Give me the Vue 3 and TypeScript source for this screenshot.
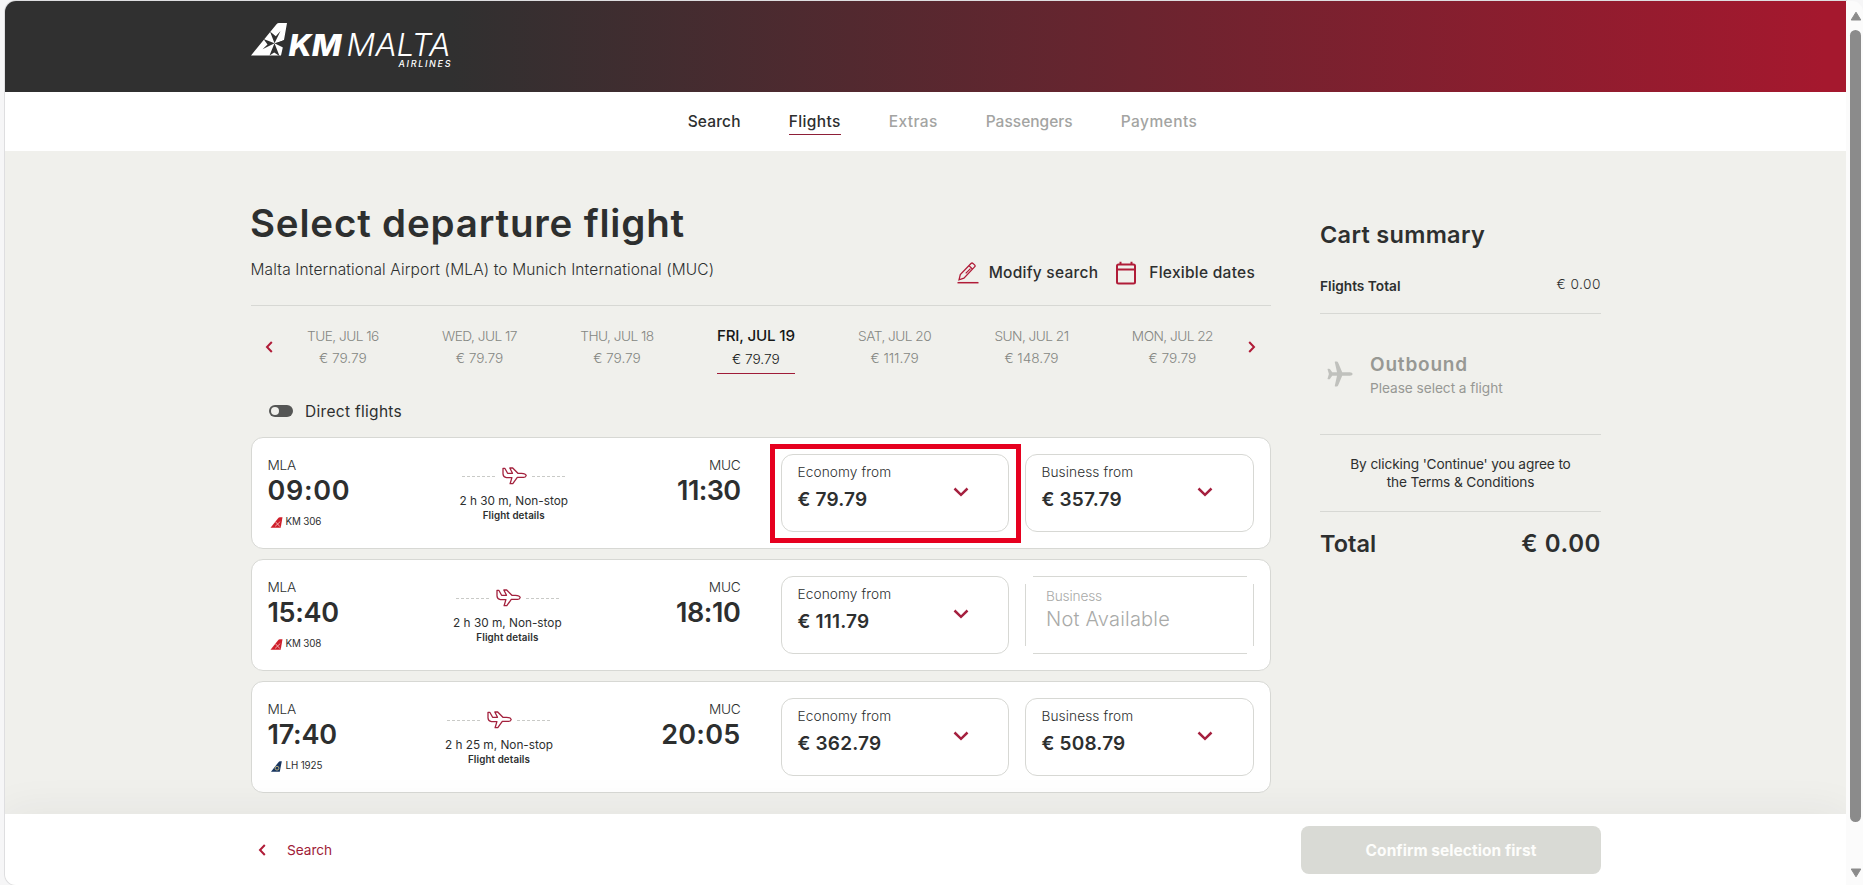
<script setup lang="ts">
interface Step { label: string; state: 'done' | 'current' | 'upcoming'; tracking: number }
interface Day { label: string; price: string; selected?: boolean }
interface Fare { cabin: string; price: string | null; highlighted?: boolean }
interface Flight {
  departs: string; departTracking: number
  arrives: string; arriveTracking: number
  duration: string; code: string; carrier: 'km' | 'lh'; fares: Fare[]
}

const steps: Step[] = [
  { label: 'Search', state: 'done', tracking: 0.16 },
  { label: 'Flights', state: 'current', tracking: 0.38 },
  { label: 'Extras', state: 'upcoming', tracking: 0.4 },
  { label: 'Passengers', state: 'upcoming', tracking: 0.01 },
  { label: 'Payments', state: 'upcoming', tracking: 0.45 },
]

const days: Day[] = [
  { label: 'TUE, JUL 16', price: '€ 79.79' },
  { label: 'WED, JUL 17', price: '€ 79.79' },
  { label: 'THU, JUL 18', price: '€ 79.79' },
  { label: 'FRI, JUL 19', price: '€ 79.79', selected: true },
  { label: 'SAT, JUL 20', price: '€ 111.79' },
  { label: 'SUN, JUL 21', price: '€ 148.79' },
  { label: 'MON, JUL 22', price: '€ 79.79' },
]

const flights: Flight[] = [
  {
    departs: '09:00', departTracking: 0.7, arrives: '11:30', arriveTracking: -0.6,
    duration: '2 h 30 m, Non-stop', code: 'KM 306', carrier: 'km',
    fares: [
      { cabin: 'Economy', price: '€ 79.79', highlighted: true },
      { cabin: 'Business', price: '€ 357.79' },
    ],
  },
  {
    departs: '15:40', departTracking: -0.3, arrives: '18:10', arriveTracking: -0.4,
    duration: '2 h 30 m, Non-stop', code: 'KM 308', carrier: 'km',
    fares: [
      { cabin: 'Economy', price: '€ 111.79' },
      { cabin: 'Business', price: null },
    ],
  },
  {
    departs: '17:40', departTracking: -0.25, arrives: '20:05', arriveTracking: 0.25,
    duration: '2 h 25 m, Non-stop', code: 'LH 1925', carrier: 'lh',
    fares: [
      { cabin: 'Economy', price: '€ 362.79' },
      { cabin: 'Business', price: '€ 508.79' },
    ],
  },
]

const spacing = (px: number) => ({ letterSpacing: `${px}px` })
</script>

<template>
  <div class="window">
    <div class="page">
      <header class="brand-bar">
        <svg class="logo" width="204" height="48" viewBox="0 0 204 48">
          <path d="M1 33.500 26.500 2.200Q27.500 1 29 1h8l-3 17-8 3.500 7 3-2 9z" fill="#fff" />
          <g fill="#303030">
            <path d="M24.500 21.300 20 9.500l5.800 4.800 4.700-5.300z" />
            <path d="M24.500 21.300 13.500 17l4 5.500-5 4.800z" />
            <path d="M24.500 21.300 19.500 33.500l4.700-3 5.300 3.500z" />
            <path d="M24.500 21.300 35 18l-2.500 3.500L34 26z" />
          </g>
          <text class="logo-bold" x="38.500" y="33.500" textLength="53" lengthAdjust="spacingAndGlyphs">KM</text>
          <text class="logo-thin" x="96.500" y="33.500" textLength="104" lengthAdjust="spacingAndGlyphs">MALTA</text>
          <text class="logo-small" x="148.500" y="45" textLength="52" lengthAdjust="spacing">AIRLINES</text>
        </svg>
      </header>

      <nav class="steps">
        <a v-for="s in steps" :key="s.label" class="step" :class="s.state" :style="spacing(s.tracking)">{{ s.label }}</a>
      </nav>

      <main class="content">
        <section class="results">
          <div class="title-row">
            <div>
              <h1>Select departure flight</h1>
              <p class="route">Malta International Airport (MLA) to Munich International (MUC)</p>
            </div>
            <div class="actions">
              <a class="action modify">
                <svg width="22" height="22" viewBox="0 0 22 22" fill="none" stroke="#b01c38" stroke-width="1.300">
                  <path d="M.500 20.700h21" stroke-width="1.500" />
                  <path d="M2 17.800 3.300 12.600 14 1.500q1-1 2-.100l1.600 1.500q1 1 0 2L6.900 16.200z M12 3.600l3.600 3.600 M8.700 11.400l4.800-4.800" />
                </svg>
                Modify search
              </a>
              <a class="action">
                <svg width="22" height="24" viewBox="0 0 22 24" fill="none" stroke="#b01c38" stroke-width="2">
                  <rect x="2" y="3.500" width="18" height="19" rx="1.500" />
                  <path d="M2 8.500h18M5.500.800v3M16.500.800v3" />
                </svg>
                Flexible dates
              </a>
            </div>
          </div>

          <div class="calendar">
            <svg class="chev" width="8" height="12" viewBox="0 0 8 12"><path d="M6.800 1 2 6l4.800 5" /></svg>
            <div class="days">
              <div v-for="d in days" :key="d.label" class="day" :class="{ selected: d.selected }">
                <span class="day-label">{{ d.label }}</span>
                <span class="day-price">{{ d.price }}</span>
              </div>
            </div>
            <svg class="chev" width="8" height="12" viewBox="0 0 8 12"><path d="M1.200 1 6 6l-4.800 5" /></svg>
          </div>

          <div class="direct">
            <span class="toggle"><i></i></span>
            <span>Direct flights</span>
          </div>

          <div class="cards">
            <article v-for="f in flights" :key="f.code" class="card">
              <div class="leg">
                <div class="stop">
                  <span class="iata">MLA</span>
                  <span class="time" :style="spacing(f.departTracking)">{{ f.departs }}</span>
                  <span class="code">
                    <svg v-if="f.carrier === 'km'" width="13" height="11" viewBox="0 0 13 11">
                      <path d="M.500 10.800 8.500.800Q9 .200 9.800.200h2.700l-1.800 10.600z" fill="#cf1f2b" />
                      <path d="m5.500 4.800 4.400 4.800m.300-5L5.200 9.300" stroke="#f6c9cb" stroke-width=".800" />
                    </svg>
                    <svg v-else width="13" height="11" viewBox="0 0 13 11">
                      <path d="M1 10.800 8.700.900Q9.200.300 10 .300h1.800L9.800 10.800z" fill="#17355f" />
                      <circle cx="7" cy="7.200" r="1.900" fill="none" stroke="#c9b87a" stroke-width=".900" />
                    </svg>
                    {{ f.code }}
                  </span>
                </div>
                <div class="journey">
                  <div class="track">
                    <i class="dash"></i>
                    <svg width="25" height="18" viewBox="0 0 25 18" fill="none" stroke="#a3213d" stroke-width="1.300" stroke-linejoin="round">
                      <path d="M1 1.300h1.800L5.600 6.300h4.900L7.800 1h2.900l5.200 5.300h3.600q4 .100 4.700 2.200-.300 1.900-2.400 1.900h-6.500l-4.500 6.300H8.100l1.800-6.100H4.500Q1.300 10.300 1 7z" />
                    </svg>
                    <i class="dash"></i>
                  </div>
                  <span class="duration">{{ f.duration }}</span>
                  <a class="details">Flight details</a>
                </div>
                <div class="stop end">
                  <span class="iata">MUC</span>
                  <span class="time" :style="spacing(f.arriveTracking)">{{ f.arrives }}</span>
                </div>
              </div>

              <div class="fares">
                <template v-for="fare in f.fares" :key="fare.cabin">
                  <button v-if="fare.price" class="fare" :class="{ highlighted: fare.highlighted }">
                    <span class="fare-text">
                      <span class="fare-label">{{ fare.cabin }} from</span>
                      <span class="fare-price">{{ fare.price }}</span>
                    </span>
                    <svg width="16" height="10" viewBox="0 0 16 10"><path d="m1.500 1.500 6.500 6.300 6.500-6.300" fill="none" stroke="#a5203f" stroke-width="2.500" /></svg>
                  </button>
                  <div v-else class="fare unavailable">
                    <span class="fare-text">
                      <span class="fare-label">{{ fare.cabin }}</span>
                      <span class="fare-none">Not Available</span>
                    </span>
                  </div>
                </template>
              </div>
            </article>
          </div>
        </section>

        <aside class="cart">
          <h2>Cart summary</h2>
          <div class="line"><b>Flights Total</b><span>€ 0.00</span></div>
          <div class="outbound">
            <svg width="26" height="26" viewBox="0 0 26 26" fill="#c0c1bd">
              <path d="M15.200 11.300 11.200 1.800Q10.700.500 9.500.500H8.300q-.700 0-.500.800l2.200 10H5.200L3.100 8.300Q2.700 7.800 2.100 7.800H1q-.600 0-.400.700L1.900 13 .600 17.500q-.200.700.400.700h1.100q.600 0 1-.500l2.100-3h4.800l-2.200 10q-.200.800.500.800h1.200q1.200 0 1.700-1.300l4-9.500h7.600q2.700 0 2.900-1.700-.200-1.700-2.900-1.700z" />
            </svg>
            <div>
              <strong>Outbound</strong>
              <p>Please select a flight</p>
            </div>
          </div>
          <p class="terms">By clicking 'Continue' you agree to<br>the Terms &amp; Conditions</p>
          <div class="total"><span class="word">Total</span><span>€ 0.00</span></div>
        </aside>
      </main>

      <footer class="footer">
        <a class="back">
          <svg class="chev" width="8" height="12" viewBox="0 0 8 12"><path d="M6.800 1 2 6l4.800 5" /></svg>
          Search
        </a>
        <button class="confirm">Confirm selection first</button>
      </footer>
    </div>

    <div class="scrollbar">
      <svg width="12" height="10" viewBox="0 0 12 10"><path d="M6 1.200 10.800 9H1.200z" /></svg>
      <div class="thumb"></div>
      <svg class="down" width="12" height="10" viewBox="0 0 12 10"><path d="M6 8.800 10.800 1H1.200z" /></svg>
    </div>
  </div>
</template>

<style>
body { margin: 0; overflow: hidden; background: #f7f7f8; }
</style>

<style scoped>
* { box-sizing: border-box; }
h1, h2, p { margin: 0; }
button { font: inherit; color: inherit; background: none; border: 0; padding: 0; text-align: left; }
svg { display: block; flex: none; }

.window {
  display: flex;
  width: 1863px;
  height: 885px;
  padding: 1px 0 0 5px;
  background: #f6f6f7;
  font-family: Inter, "Liberation Sans", sans-serif;
  color: #2d2f2f;
}
.page {
  display: flex;
  flex-direction: column;
  width: 1841px;
  overflow: hidden;
  background: #f0f0ec;
  border-radius: 11px 0 0 11px;
  box-shadow: 0 0 0 1px #dedee0;
}

.brand-bar {
  flex: none;
  height: 91px;
  padding: 21px 0 0 245px;
  background: linear-gradient(90deg, #303030 445px, #a5182e 1820px);
}
.logo-bold, .logo-thin { fill: #fff; font-style: italic; font-size: 30.500px; }
.logo-bold { font-weight: 800; }
.logo-thin { font-weight: 300; }
.logo-small { fill: #fff; font-style: italic; font-weight: 500; font-size: 9px; }

.steps {
  flex: none;
  display: flex;
  justify-content: center;
  gap: 48px;
  height: 59px;
  padding: 18px 0 0 34px;
  background: #fff;
}
.step {
  height: 25px;
  line-height: 23px;
  font-size: 15.500px;
  font-weight: 500;
  color: #2d2f2f;
}
.step.current { border-bottom: 1px solid #8e1f38; }
.step.upcoming { color: #a3a4a2; }

.content {
  flex: 1;
  display: flex;
  min-height: 0;
  padding: 48px 0 0 246px;
}
.results { width: 1020px; }
.title-row {
  display: flex;
  justify-content: space-between;
  height: 107px;
  border-bottom: 1px solid #d7d8d4;
}
h1 {
  font-size: 38.500px;
  line-height: 48px;
  font-weight: 600;
  letter-spacing: .820px;
  margin: 0 0 11px -1px;
}
.route { font-size: 15.500px; line-height: 24px; font-weight: 300; letter-spacing: .140px; margin-left: -.500px; }
.actions { display: flex; align-items: center; gap: 17px; height: 24px; margin: 62px 16px 0 0; }
.action { display: flex; align-items: center; gap: 12px; font-size: 15.500px; line-height: 24px; font-weight: 500; letter-spacing: .260px; }
.action.modify { gap: 10px; }

.calendar { display: flex; padding: 20px 15px 0 14px; height: 93px; }
.chev { margin-top: 15px; }
.chev path { fill: none; stroke: #b01c38; stroke-width: 2; }
.days { flex: 1; display: flex; justify-content: space-between; padding: 0 35px 0 34px; }
.day { display: flex; flex-direction: column; align-items: center; align-self: flex-start; font-weight: 300; font-size: 13.700px; color: #858783; }
.day-label { line-height: 20px; letter-spacing: -.540px; }
.day-price { line-height: 22px; margin-top: 1px; letter-spacing: -.050px; }
.day.selected { color: #161818; border-bottom: 1px solid #a01c38; padding-bottom: 4px; }
.day.selected .day-label { font-size: 15.200px; font-weight: 500; letter-spacing: -.190px; }
.day.selected .day-price { padding-top: 1px; margin-bottom: -1px; }

.direct { display: flex; align-items: center; gap: 12px; height: 24px; padding-left: 18px; font-size: 15.500px; letter-spacing: .300px; }
.toggle { display: flex; align-items: center; width: 24px; height: 12px; padding-left: 2px; border-radius: 6px; background: #555655; }
.toggle i { width: 8px; height: 8px; border-radius: 50%; background: #f0f0ec; }

.cards { display: flex; flex-direction: column; gap: 10px; margin-top: 14px; }
.card {
  display: flex;
  gap: 40px;
  height: 112px;
  padding: 0 16px 0 15px;
  background: #fff;
  border: 1px solid #d7d8d4;
  border-radius: 12px;
}
.leg { display: flex; justify-content: space-between; width: 474px; padding: 18px .500px 0 .500px; }
.stop { display: flex; flex-direction: column; }
.stop.end { align-items: flex-end; }
.iata { font-size: 13.700px; line-height: 18px; font-weight: 300; letter-spacing: -.250px; }
.time { font-size: 27px; line-height: 32px; font-weight: 600; margin-top: 1px; }
.code { display: flex; align-items: center; gap: 3px; padding-left: 2px; margin-top: 8px; font-size: 9.800px; line-height: 14px; letter-spacing: -.120px; }
.journey { display: flex; flex-direction: column; align-items: center; padding-top: 11px; }
.track { display: flex; align-items: center; gap: 5px; height: 18px; margin-bottom: 8px; padding-left: 2px; }
.dash { width: 35px; height: 1px; background: repeating-linear-gradient(90deg, #c9cac7 0 3px, transparent 3px 5px); }
.duration { font-size: 11.800px; line-height: 16px; }
.details { font-size: 9.800px; line-height: 14px; font-weight: 600; letter-spacing: .110px; }

.fares { display: flex; gap: 16px; padding-top: 16px; }
.fare {
  position: relative;
  display: flex;
  justify-content: space-between;
  width: 228px;
  height: 78px;
  padding: 8px 39px 0 15.500px;
  border: 1px solid #d7d8d4;
  border-radius: 12px;
}
.fare + .fare { width: 229px; padding-right: 40px; }
.fare svg { margin-top: 24px; }
.fare-text { display: flex; flex-direction: column; }
.fare-label { font-size: 13.700px; line-height: 18px; font-weight: 300; letter-spacing: .080px; }
.fare-price { font-size: 19px; line-height: 24px; margin-top: 7px; font-weight: 600; letter-spacing: .180px; }
.fare.highlighted::after {
  content: "";
  position: absolute;
  inset: -11px -13px -12px -12px;
  border: 5px solid #e6001f;
}
.fare.unavailable {
  border: 0;
  border-radius: 0;
  padding: 11px 0 0 21px;
  color: #a9aaa8;
  background:
    linear-gradient(#d7d8d4, #d7d8d4) center top / 214px 1px no-repeat,
    linear-gradient(#d7d8d4, #d7d8d4) center bottom / 214px 1px no-repeat,
    linear-gradient(#d7d8d4, #d7d8d4) left center / 1px 62px no-repeat,
    linear-gradient(#d7d8d4, #d7d8d4) right center / 1px 62px no-repeat;
}
.unavailable .fare-label { letter-spacing: -.170px; }
.fare-none { font-size: 20px; line-height: 24px; margin-top: 2px; font-weight: 300; letter-spacing: .210px; }

.cart { width: 281px; margin-left: 49px; padding-top: 21px; }
h2 { font-size: 23.500px; line-height: 30px; font-weight: 600; letter-spacing: .300px; }
.line {
  display: flex;
  justify-content: space-between;
  height: 64px;
  padding-top: 26px;
  font-size: 13.700px;
  line-height: 18px;
  border-bottom: 1px solid #d7d8d4;
}
.line b { font-weight: 600; padding-top: 1px; }
.line span { font-weight: 300; letter-spacing: .500px; margin-top: -1px; }
.outbound {
  display: flex;
  gap: 17px;
  height: 121px;
  padding: 38px 0 0 7px;
  color: #979894;
  border-bottom: 1px solid #d7d8d4;
}
.outbound svg { margin-top: 9px; }
.outbound strong { display: block; font-size: 19px; line-height: 24px; font-weight: 600; letter-spacing: .800px; margin-top: 1px; }
.outbound p { font-size: 13.700px; line-height: 18px; margin-top: 2px; letter-spacing: -.050px; }
.terms { height: 77px; padding-top: 20px; text-align: center; font-size: 13.700px; line-height: 18px; letter-spacing: -.130px; border-bottom: 1px solid #d7d8d4; }
.total { display: flex; justify-content: space-between; padding-top: 16px; font-size: 24px; line-height: 32px; font-weight: 600; letter-spacing: .600px; }
.total .word { font-size: 23.500px; letter-spacing: 0; }

.footer {
  flex: none;
  display: flex;
  align-items: flex-start;
  justify-content: space-between;
  height: 71px;
  padding: 12px 245px 0 253px;
  background: #fff;
  box-shadow: 0 0 44px rgba(40, 40, 50, .07);
  position: relative;
}
.back { display: flex; gap: 21px; height: 48px; align-items: center; font-size: 13.700px; color: #a01c38; letter-spacing: -.050px; }
.back .chev { margin-top: 0; }
.confirm {
  width: 300px;
  height: 48px;
  border-radius: 8px;
  background: #d9dad5;
  color: #fdfdfb;
  font-size: 15.500px;
  font-weight: 700;
  text-align: center;
  letter-spacing: .050px;
}

.scrollbar {
  display: flex;
  flex-direction: column;
  align-items: center;
  width: 17px;
  padding: 10px 0 7px 2px;
  background: #fbfbfb;
  border-radius: 0 11px 0 0;
}
.scrollbar svg { fill: #8b8b8b; stroke: #8b8b8b; stroke-linejoin: round; }
.thumb { width: 11px; height: 792px; margin-top: 9px; border-radius: 6px; background: #8b8b8b; }
.down { margin-top: auto; }
</style>
